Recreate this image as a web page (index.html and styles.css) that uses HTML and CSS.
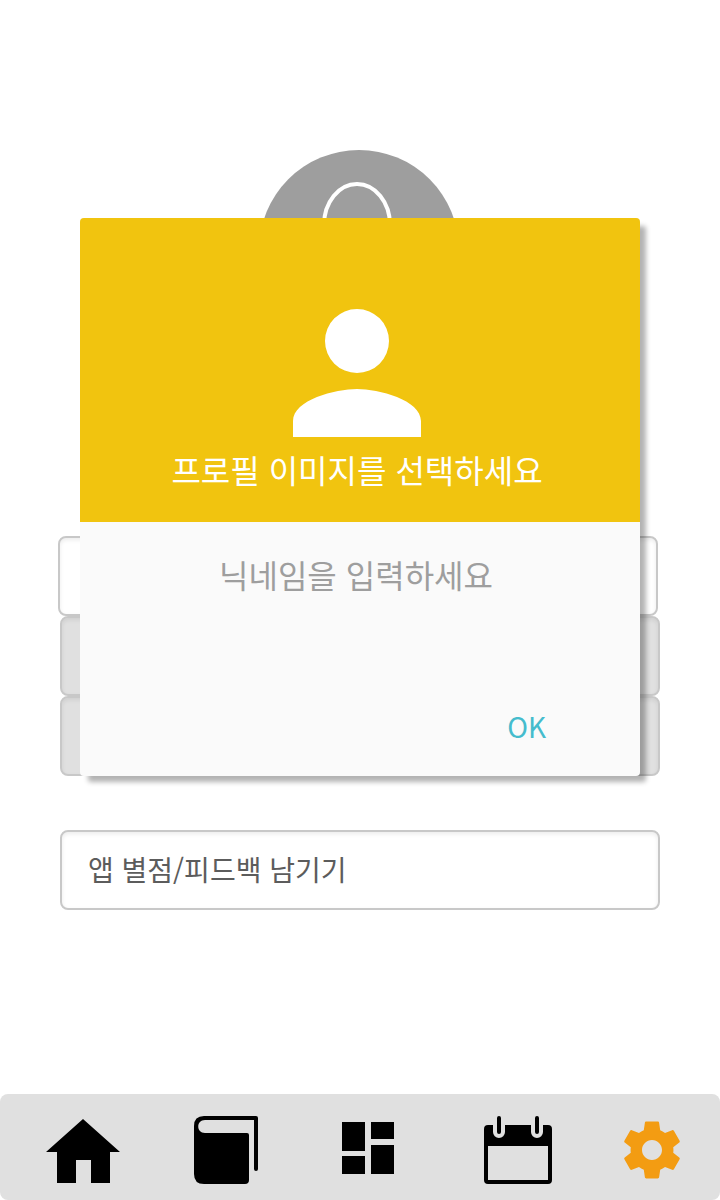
FILE: index.html
```html
<!DOCTYPE html>
<html lang="ko">
<head>
<meta charset="utf-8">
<meta name="viewport" content="width=device-width, initial-scale=1">
<title>설정</title>
<link rel="stylesheet" href="styles.css">
</head>
<body>
<div class="screen">
  <main class="settings">
    <svg class="avatar" viewBox="0 0 200 200" aria-hidden="true">
      <circle cx="100" cy="100" r="100" fill="#9e9e9e"/>
      <ellipse cx="98" cy="75" rx="33" ry="41" fill="none" stroke="#fff" stroke-width="4"/>
      <path d="M40 165c0-28 26-42 58-42s58 14 58 42" fill="none" stroke="#fff" stroke-width="4"/>
    </svg>
    <div class="profile">
      <div class="row"></div>
    </div>
    <div class="options">
      <div class="row row-muted"></div>
      <div class="row row-muted"></div>
    </div>
    <div class="feedback">
      <button class="row" type="button">앱 별점/피드백 남기기</button>
    </div>
  </main>

  <nav class="tabs" aria-label="메뉴">
    <a class="tab" href="#home" aria-label="홈">
      <svg width="74" height="66" viewBox="0 -2 74 66"><path d="M37 0L74 33H64V64H45V41H30V64H11V33H0Z" fill="#000"/></svg>
    </a>
    <a class="tab" href="#book" aria-label="책">
      <svg width="64" height="68" viewBox="0 0 64 68"><path d="M10 0H62Q64 0 64 2V53Q64 55 62 55T60 53V4H11C2 4 2 17 11 17H53Q55 17 55 19V64Q55 68 51 68H10Q0 68 0 58V10Q0 0 10 0Z" fill="#000"/></svg>
    </a>
    <a class="tab" href="#board" aria-label="대시보드">
      <svg width="52" height="56" viewBox="0 0 52 56"><path d="M0 0H23V29H0ZM29 0H52V17H29ZM0 34H23V52H0ZM29 23H52V52H29Z" fill="#000"/></svg>
    </a>
    <a class="tab" href="#calendar" aria-label="달력">
      <svg width="68" height="68" viewBox="0 0 68 68"><path fill-rule="evenodd" d="M4 9H9V16A6 6 0 0 0 21 16V9H47V16A6 6 0 0 0 59 16V9H64Q68 9 68 13V64Q68 68 64 68H4Q0 68 0 64V13Q0 9 4 9ZM4 30V64H64V30Z" fill="#000"/><path d="M15 2V16M53 2V16" stroke="#000" stroke-width="4" stroke-linecap="round"/></svg>
    </a>
    <a class="tab" href="#settings" aria-label="설정" aria-current="page">
      <svg width="56" height="58" viewBox="2.2 2 19.6 20"><path fill="#f39c12" d="M19.43 12.98c.04-.32.07-.64.07-.98s-.03-.66-.07-.98l2.11-1.65c.19-.15.24-.42.12-.64l-2-3.46c-.12-.22-.39-.3-.61-.22l-2.49 1c-.52-.4-1.08-.73-1.69-.98l-.38-2.65C14.46 2.18 14.25 2 14 2h-4c-.25 0-.46.18-.49.42l-.38 2.65c-.61.25-1.17.59-1.69.98l-2.49-1c-.23-.09-.49 0-.61.22l-2 3.46c-.13.22-.07.49.12.64l2.11 1.65c-.04.32-.07.65-.07.98s.03.66.07.98l-2.11 1.65c-.19.15-.24.42-.12.64l2 3.46c.12.22.39.3.61.22l2.49-1c.52.4 1.08.73 1.69.98l.38 2.65c.03.24.24.42.49.42h4c.25 0 .46-.18.49-.42l.38-2.65c.61-.25 1.17-.59 1.69-.98l2.49 1c.23.09.49 0 .61-.22l2-3.46c.12-.22.07-.49-.12-.64l-2.11-1.65zM12 15.5c-1.93 0-3.5-1.57-3.5-3.5s1.57-3.5 3.5-3.5 3.5 1.57 3.5 3.5-1.57 3.5-3.5 3.5z"/></svg>
    </a>
  </nav>

  <form class="dialog" role="dialog" aria-labelledby="dialog-title">
    <header class="dialog-head">
      <svg width="128" height="128" viewBox="4 4 16 16" aria-hidden="true"><path fill="#fff" d="M12 12a4 4 0 1 0 0-8 4 4 0 0 0 0 8zm0 2c-2.67 0-8 1.34-8 4v2h16v-2c0-2.66-5.33-4-8-4z"/></svg>
      <h1 class="dialog-title" id="dialog-title">프로필 이미지를 선택하세요</h1>
    </header>
    <div class="dialog-body">
      <input class="nickname" type="text" placeholder="닉네임을 입력하세요" aria-label="닉네임">
      <button class="ok" type="button">OK</button>
    </div>
  </form>
</div>
</body>
</html>
```
FILE: styles.css
```css
* {
  box-sizing: border-box;
}

body {
  margin: 0;
  background: #fff;
  font-family: "Noto Sans CJK KR", "Noto Sans", sans-serif;
}

.screen {
  position: relative;
  display: flex;
  flex-direction: column;
  min-height: 100vh;
}

.settings {
  flex: 1;
  display: flex;
  flex-direction: column;
  padding-top: 150px;
}

.avatar {
  width: 200px;
  align-self: center;
  margin: 0 2px 186px 0;
}

.profile {
  padding: 0 62px 0 58px;
}

.options,
.feedback {
  padding: 0 60px;
}

.feedback {
  margin: 54px 0;
}

.row {
  display: block;
  width: 100%;
  height: 80px;
  padding: 0 26px 2px;
  border: 2px solid #c8c8c8;
  border-radius: 8px;
  background: #fff;
  box-shadow: inset 0 2px 4px rgba(0, 0, 0, 0.08);
  color: #5c5c5c;
  font: inherit;
  font-size: 28px;
  text-align: left;
}

.row-muted {
  background: #e0e0e0;
}

.tabs {
  display: grid;
  grid-template-columns: 166fr 120fr 164fr 136fr 132fr;
  height: 106px;
  padding: 6px 2px 0 0;
  border-radius: 8px;
  background: #e0e0e0;
}

.tab {
  display: flex;
  align-items: center;
  justify-content: center;
}

.dialog {
  position: absolute;
  top: 218px;
  left: 80px;
  right: 80px;
  border-radius: 4px;
  background: #fafafa;
  box-shadow: 7px 7px 5px -1px rgba(0, 0, 0, 0.3);
}

.dialog-head {
  display: flex;
  flex-direction: column;
  align-items: center;
  gap: 8px;
  padding: 91px 6px 29px 0;
  border-radius: 4px 4px 0 0;
  background: #f1c40f;
}

.dialog-title {
  margin: 0;
  color: #fff;
  font-size: 32px;
  font-weight: 400;
  line-height: 48px;
}

.dialog-body {
  display: flex;
  flex-direction: column;
  padding: 26px 8px 26px 0;
}

.nickname {
  width: 100%;
  height: 52px;
  padding: 0;
  border: 0;
  background: transparent;
  color: #5c5c5c;
  font: inherit;
  font-size: 32px;
  text-align: center;
}

.nickname::placeholder {
  color: #9e9e9e;
  opacity: 1;
}

.ok {
  align-self: flex-end;
  margin: 102px 76px 0 0;
  padding: 0 10px;
  border: 0;
  background: transparent;
  color: #45bccd;
  font: inherit;
  font-size: 28px;
  line-height: 48px;
}
```
